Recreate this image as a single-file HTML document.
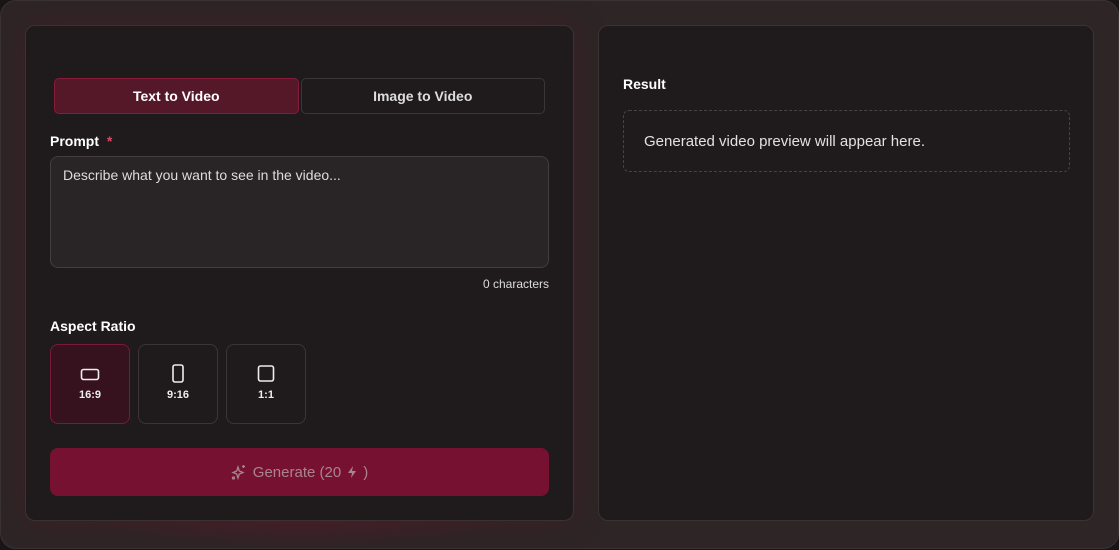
<!DOCTYPE html>
<html><head><meta charset="utf-8"><style>
*{box-sizing:border-box;margin:0;padding:0}
body{width:1119px;height:549px;background:#191516;font-family:"Liberation Sans",sans-serif;overflow:hidden;position:relative}
.outer{position:absolute;left:0;top:0;width:1119px;height:549px;border-radius:16px;background:#2d2526;border:1px solid #3a3233}
.glow{position:absolute;left:40px;top:440px;width:520px;height:110px;background:radial-gradient(ellipse at center,rgba(120,20,50,.45),rgba(120,20,50,0) 70%)}
.panel{position:absolute;top:25px;height:496px;background:#1f1a1b;border:1px solid #3a3334;border-radius:10px}
.l{left:25px;width:549px;box-shadow:0 0 30px rgba(90,20,40,.35)}
.r{left:598px;width:496px}
.tabs{position:absolute;left:28px;top:52px;width:491px;height:36px;display:flex;gap:2px}
.tab{flex:1;border-radius:5px;border:1px solid #3c3536;color:#ddd;font-size:14px;font-weight:bold;display:flex;align-items:center;justify-content:center}
.tab.a{background:#551829;border-color:#8a1a3a;color:#fff}
.lab{position:absolute;color:#fff;font-size:14px;font-weight:bold}
.ta{position:absolute;left:24px;top:130px;width:499px;height:112px;background:#292425;border:1px solid #443d3e;border-radius:8px;color:#ddd;font-size:14px;padding:10px 12px}
.cnt{position:absolute;right:24px;top:251px;color:#ddd;font-size:12px}
.ar{position:absolute;top:318px;width:80px;height:80px;border:1px solid #3c3536;border-radius:8px;color:#eee;font-size:11px;font-weight:bold;text-align:center}
.ar.a{background:#36121e;border-color:#7a1a38}
.ar svg{position:absolute;left:50%;top:29px;transform:translate(-50%,-50%)}
.ar span{position:absolute;left:0;right:0;top:44px}
.gen{position:absolute;left:24px;top:422px;width:499px;height:48px;border-radius:8px;background:#771131;color:#a88590;font-size:15px;display:flex;align-items:center;justify-content:center;gap:6px}
.box{position:absolute;left:24px;top:84px;width:447px;height:62px;border:1px dashed #4a4243;border-radius:6px;color:#e6e0e0;font-size:15px;padding:22px 20px}
</style></head><body>
<div class="outer"></div>
<div class="glow"></div>
<div class="panel l">
 <div class="tabs"><div class="tab a">Text to Video</div><div class="tab">Image to Video</div></div>
 <div class="lab" style="left:24px;top:107px">Prompt <span style="color:#e0455f;margin-left:4px">*</span></div>
 <div class="ta">Describe what you want to see in the video...</div>
 <div class="cnt">0 characters</div>
 <div class="lab" style="left:24px;top:292px">Aspect Ratio</div>
 <div class="ar a" style="left:24px"><svg width="20" height="14" viewBox="0 0 20 14"><rect x="1.5" y="2.5" width="17" height="10" rx="2" fill="none" stroke="#eee" stroke-width="1.6"/></svg><span>16:9</span></div>
 <div class="ar" style="left:112px"><svg width="14" height="20" viewBox="0 0 14 20"><rect x="2" y="1" width="10" height="17" rx="2" fill="none" stroke="#eee" stroke-width="1.6"/></svg><span>9:16</span></div>
 <div class="ar" style="left:200px"><svg width="18" height="18" viewBox="0 0 18 18"><rect x="1.5" y="1" width="15" height="15" rx="2" fill="none" stroke="#eee" stroke-width="1.6"/></svg><span>1:1</span></div>
 <div class="gen"><svg width="16" height="16" viewBox="0 0 16 16" fill="none" stroke="#a88590" stroke-width="1.3"><path d="M7 3 L8.3 7 L12 8.5 L8.3 10 L7 14 L5.7 10 L2 8.5 L5.7 7 Z"/><path d="M12.5 1v3M11 2.5h3"/><circle cx="2.5" cy="14" r="1"/></svg>Generate (20 <svg width="10" height="12" viewBox="0 0 10 12"><path d="M6 0 L1 7 H5 L4 12 L9 5 H5 Z" fill="#a88590"/></svg> )</div>
</div>
<div class="panel r">
 <div class="lab" style="left:24px;top:50px">Result</div>
 <div class="box">Generated video preview will appear here.</div>
</div>
</body></html>
